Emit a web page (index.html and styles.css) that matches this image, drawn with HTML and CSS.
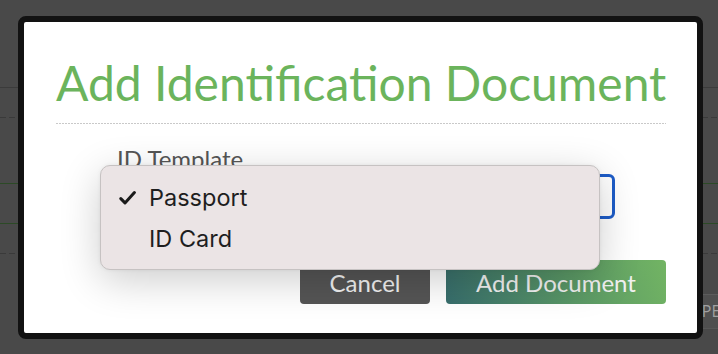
FILE: index.html
```html
<!DOCTYPE html>
<html lang="en">
<head>
  <meta charset="UTF-8" />
  <meta name="viewport" content="width=device-width, initial-scale=1.0" />
  <title>Add Identification Document</title>
  <link rel="stylesheet" href="styles.css">
</head>
<body>
  <!-- Page behind the dialog (dimmed) -->
  <div class="backdrop">
    <div class="bg-row bg-head"></div>
    <div class="bg-row bg-dash"></div>
    <div class="bg-row bg-green"></div>
    <div class="bg-row bg-green"></div>
    <div class="bg-row bg-dash bg-short"></div>
    <div class="bg-row bg-table"><span class="bg-cell">TYPE</span></div>
  </div>

  <div class="modal">
    <h1 class="modal-title">Add Identification Document</h1>
    <div class="rule"></div>
    <form class="doc-form">
      <label class="field-label" for="template">ID Template</label>
      <div class="select-box" id="template"></div>
    </form>
    <div class="actions">
      <button type="button" class="btn btn-cancel">Cancel</button>
      <button type="button" class="btn btn-add">Add Document</button>
    </div>
  </div>

  <!-- Open native select menu -->
  <ul class="popup">
    <li class="popup-item">
      <span class="check">
        <svg width="17" height="14" viewBox="0 0 17 14"><path d="M1.8 7.6 L6 11.9 L15.4 1.6" fill="none" stroke="#1a1a1a" stroke-width="3" stroke-linecap="round" stroke-linejoin="round"/></svg>
      </span>
      Passport
    </li>
    <li class="popup-item"><span class="check"></span>ID Card</li>
  </ul>
</body>
</html>
```

FILE: styles.css
```css
/* Base styles */
body {
  margin: 0;
  padding: 0;
  background-color: #494949;
  font-family: Lato, "Open Sans", sans-serif;
  overflow: hidden;
}
/* Dimmed page behind the dialog */
.backdrop {
  width: 718px;
  height: 354px;
}
.bg-row {
  box-sizing: border-box;
}
.bg-head {
  height: 88px;
  border-bottom: 1px solid #3b3b3b;
}
.bg-dash {
  height: 30px;
  background: repeating-linear-gradient(90deg, #3a3a3a 0 6px, transparent 6px 9px) bottom left / 100% 1px no-repeat;
}
.bg-green {
  height: 66px;
  border-bottom: 1px solid #2c4a26;
}
.bg-row.bg-green + .bg-green {
  height: 40px;
}
.bg-short {
  height: 30px;
}
/* Table header row only shows to the right of the dialog */
.bg-table {
  margin: 40px 0 0 684px;
  height: 35px;
  background-color: #4f4f4f;
  border-top: 1px solid #5c5c5c;
  border-bottom: 1px solid #575757;
  color: #a0a0a0;
  font-family: "Open Sans", sans-serif;
  font-size: 16px;
  line-height: 33px;
  white-space: nowrap;
  overflow: hidden;
}
/* Dialog */
.modal {
  position: absolute;
  left: 18px;
  top: 16px;
  width: 685px;
  height: 323px;
  box-sizing: border-box;
  border: 6px solid #121212;
  border-radius: 8px;
  background: #fff;
  padding: 32px 31px 0 32px;
}
.modal-title {
  margin: 0;
  font-size: 48px;
  line-height: 58px;
  font-weight: normal;
  color: #6bb45c;
  white-space: nowrap;
}
.rule {
  margin-top: 11px;
  height: 1px;
  background: repeating-linear-gradient(90deg, #c9c9c9 0 2px, transparent 2px 3px);
}
.doc-form {
  margin: 20px 51px 0 61px;
}
.field-label {
  display: block;
  font-size: 24px;
  line-height: 29px;
  color: #555;
  margin-bottom: 1px;
}
.select-box {
  height: 45px;
  box-sizing: border-box;
  border: 3px solid #1d5cc8;
  border-radius: 6px;
}
.actions {
  margin-top: 41px;
  display: flex;
  justify-content: flex-end;
  gap: 16px;
}
.btn {
  height: 44px;
  border: none;
  border-radius: 4px;
  color: #f1f1f1;
  font-family: Lato, sans-serif;
  font-size: 24px;
  padding: 0;
}
.btn-cancel {
  width: 130px;
  background-color: #555;
}
.btn-add {
  width: 220px;
  background: linear-gradient(70deg, #376d6c 0%, #5a9866 55%, #72b463 100%);
}
/* Native popup menu */
.popup {
  position: absolute;
  left: 100px;
  top: 165px;
  width: 500px;
  height: 105px;
  box-sizing: border-box;
  margin: 0;
  padding: 11px 0 0 0;
  list-style: none;
  background-color: #ebe4e5;
  border: 1px solid #c6c2c2;
  border-radius: 10px;
  box-shadow: 0 10px 40px rgba(0, 0, 0, 0.2), 0 0 4px rgba(0, 0, 0, 0.06);
  font-family: Inter, "Noto Sans", sans-serif;
  font-size: 23.5px;
  color: #1e1e1e;
}
.popup-item {
  display: flex;
  align-items: center;
  height: 41px;
  padding-left: 18px;
}
.check {
  width: 30px;
  display: flex;
  align-items: center;
}
```
